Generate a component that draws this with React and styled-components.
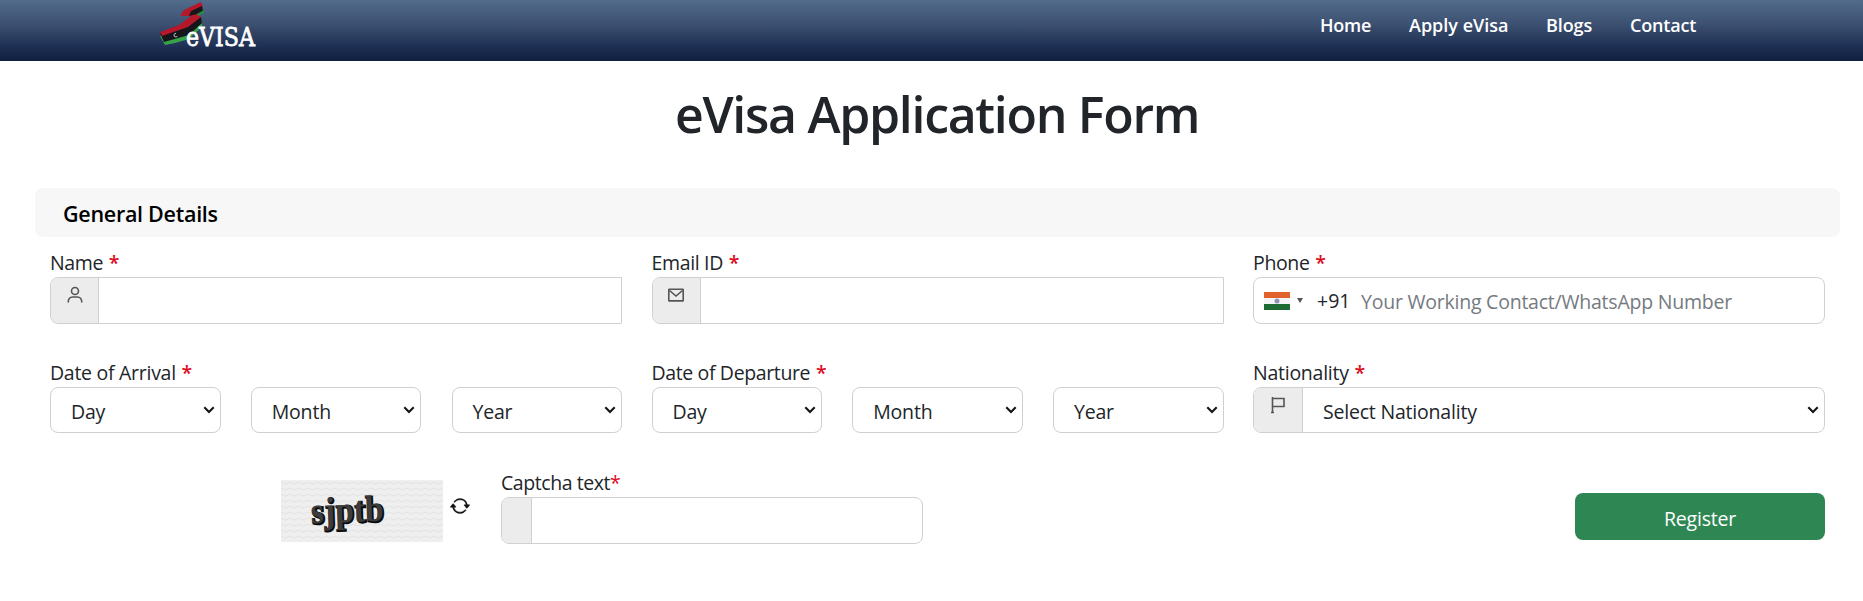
import styled, { createGlobalStyle } from "styled-components";
import { BsArrowRepeat } from "react-icons/bs";

const GlobalStyle = createGlobalStyle`
  * {
    box-sizing: border-box;
  }
  body {
    margin: 0;
    background: #fff;
    color: #212529;
    font-family: "Open Sans", "Noto Sans", sans-serif;
    font-size: 19.5px;
    line-height: 30px;
    overflow: hidden;
  }
`;

const Header = styled.header`
  display: flex;
  justify-content: space-between;
  height: 61px;
  padding: 0 167px 0 155px;
  background: linear-gradient(#526c8b 0%, #3c5071 40%, #1b2c50 80%, #10203f 100%);
`;

const LogoSvg = styled.svg`
  display: block;
  width: 140px;
  height: 60px;
`;

const Nav = styled.nav`
  display: flex;
  gap: 38px;
  padding-top: 10px;
`;

const NavLink = styled.a`
  width: ${({ $width }) => $width}px;
  color: #fff;
  font-size: 18px;
  font-weight: 600;
  letter-spacing: ${({ $spacing }) => $spacing}px;
  white-space: nowrap;
`;

const Title = styled.h1`
  margin: 0;
  padding: 19px 0 0 675px;
  height: 127px;
  font-size: 50px;
  font-weight: 600;
  line-height: 68px;
  letter-spacing: -1.3px;
  white-space: nowrap;
`;

const SectionBar = styled.h2`
  margin: 0 23px 0 35px;
  height: 49px;
  padding: 1px 0 0 28px;
  border-radius: 8px;
  background: #f7f7f7;
  color: #000;
  font-size: 21.5px;
  font-weight: 600;
  line-height: 50px;
  letter-spacing: -0.28px;
`;

const Form = styled.form`
  display: grid;
  grid-template-columns: repeat(3, 572px);
  column-gap: 29.5px;
  row-gap: 33px;
  padding: 10px 0 0 50px;
`;

const Label = styled.label`
  display: block;
  height: 30px;
  padding-top: 1px;
  letter-spacing: ${({ $spacing = -0.35 }) => $spacing}px;
  white-space: nowrap;
`;

const Required = styled.span`
  margin-left: ${({ $bold }) => ($bold ? 1 : 0)}px;
  color: #dc0c1c;
  font-weight: ${({ $bold }) => ($bold ? 600 : 400)};
`;

const Group = styled.div`
  display: flex;
  width: ${({ $width }) => ($width ? `${$width}px` : "100%")};
  height: ${({ $height = 47 }) => $height}px;
  border: 1px solid #ced0d3;
  border-radius: ${({ $radius = "8px" }) => $radius};
  background: #fff;
  overflow: hidden;
`;

const Addon = styled.span`
  display: flex;
  justify-content: center;
  flex: none;
  width: ${({ $width = 48 }) => $width}px;
  padding-top: 8px;
  border-right: 1px solid #ced0d3;
  background: #ececec;
`;

const AddonSvg = styled.svg`
  width: 18px;
  height: 18px;
  fill: none;
  stroke: #555;
  stroke-width: 1.6;
`;

const Input = styled.input`
  flex: 1;
  min-width: 0;
  padding: 2px 0 0;
  border: 0;
  outline: 0;
  background: transparent;
  color: inherit;
  font: inherit;
  letter-spacing: -0.23px;
  &::placeholder {
    color: #757a80;
    opacity: 1;
  }
`;

const DialCode = styled.div`
  display: flex;
  align-items: center;
  flex: none;
  width: 107px;
  padding-left: 10px;
`;

const Flag = styled.svg`
  width: 26px;
  height: 18px;
`;

const Caret = styled.span`
  margin: 0 14px 0 7px;
  border: 3px solid transparent;
  border-top: 5px solid #555;
  border-bottom: 0;
`;

const DateRow = styled.div`
  display: grid;
  grid-template-columns: repeat(3, 170.5px);
  justify-content: space-between;
`;

const Choice = styled.div`
  display: flex;
  align-items: center;
  justify-content: space-between;
  flex: 1;
  padding: 4px 5px 0 20px;
  letter-spacing: -0.2px;
`;

const ChevronSvg = styled.svg`
  width: 12px;
  height: 8px;
  margin-top: -4px;
`;

const BottomRow = styled.div`
  display: flex;
  align-items: flex-start;
  padding: 34px 0 0 281px;
`;

const CaptchaSvg = styled.svg`
  width: 162px;
  height: 62px;
  margin: 13px 7px 0 0;
`;

const Refresh = styled.button`
  display: flex;
  width: 20px;
  margin: 29px 31px 0 0;
  padding: 0;
  border: 0;
  background: none;
  color: #111;
  font-size: 20px;
  & svg {
    stroke: #111;
    stroke-width: 0.4;
  }
`;

const Register = styled.button`
  width: 250px;
  height: 47px;
  margin: 26px 0 0 652px;
  padding: 4px 0 0;
  border: 0;
  border-radius: 8px;
  background: #2e8653;
  color: #fff;
  font: inherit;
  letter-spacing: -0.2px;
`;

const links = [
  { text: "Home", width: 51, spacing: -0.2 },
  { text: "Apply eVisa", width: 99, spacing: 0 },
  { text: "Blogs", width: 46, spacing: -0.1 },
  { text: "Contact", width: 66, spacing: -0.2 },
];

function Logo() {
  return (
    <LogoSvg viewBox="0 0 140 60" aria-label="eVISA">
      {/* ribbon, lowest band first */}
      <path d="M5 36 L10 45 L20 43 L34 39 L47 27 L47 20 L33 33Z" fill="#36a34a" />
      <path d="M5 33 L25 28 L46 17 L47 23 L34 35 L9 42Z" fill="#15151b" />
      <path d="M5 32 L24 25 L36 16 L25 16 L29 10 L46 2 L48 7 L41 12 L46 17 L33 27 L7 36Z" fill="#b5182b" />
      <path d="M36 11 L47 6 L48 11 L42 14 L34 16Z" fill="#18151b" />
      <path d="M42 14 L49 10 L49 13 L43 16Z" fill="#278c3c" />
      <path d="M21 33.4 a1.8 1.8 0 1 0 1.4 2.6" fill="none" stroke="#ddd" strokeWidth=".9" />
      <text
        x="31"
        y="46"
        fill="#fff"
        stroke="#fff"
        strokeWidth=".8"
        fontFamily="DejaVu Serif"
        fontSize="26"
        textLength="69"
        lengthAdjust="spacingAndGlyphs"
      >
        eVISA
      </text>
    </LogoSvg>
  );
}

function UserIcon() {
  return (
    <AddonSvg viewBox="0 0 18 18">
      <circle cx="9" cy="5" r="3.5" />
      <path d="M2.3 16.5 V15.5 A4.5 4.5 0 0 1 6.5 11 H11.5 A4.5 4.5 0 0 1 15.7 15.5 V16.5" />
    </AddonSvg>
  );
}

function MailIcon() {
  return (
    <AddonSvg viewBox="0 0 18 18">
      <rect x="1.8" y="3.3" width="14.4" height="11.6" rx=".5" />
      <path d="M2.5 4.5 L9 10 L15.5 4.5" />
    </AddonSvg>
  );
}

function FlagIcon() {
  return (
    <AddonSvg viewBox="0 0 18 18">
      <path d="M3.5 1 V17 M2 16.5 H5 M3.5 2.5 H15 V10.5 H3.5" />
    </AddonSvg>
  );
}

function Chevron() {
  return (
    <ChevronSvg viewBox="0 0 12 8">
      <path d="M1.3 1.3 L6 6 L10.7 1.3" fill="none" stroke="#151515" strokeWidth="2.1" />
    </ChevronSvg>
  );
}

function Select({ children, icon }) {
  return (
    <Group $height={46}>
      {icon && <Addon $width={49}>{icon}</Addon>}
      <Choice role="combobox">
        {children}
        <Chevron />
      </Choice>
    </Group>
  );
}

function Field({ label, spacing, children }) {
  return (
    <div>
      <Label $spacing={spacing}>
        {label} <Required $bold>*</Required>
      </Label>
      {children}
    </div>
  );
}

function DateSelects() {
  return (
    <DateRow>
      <Select>Day</Select>
      <Select>Month</Select>
      <Select>Year</Select>
    </DateRow>
  );
}

function Captcha() {
  return (
    <CaptchaSvg viewBox="0 0 162 62">
      <defs>
        <pattern id="waves" width="9" height="6" patternUnits="userSpaceOnUse">
          <path d="M0 2 L4.5 4 L9 2" fill="none" stroke="#e5e5e5" strokeWidth="1.3" />
        </pattern>
      </defs>
      <rect width="162" height="62" fill="#efefef" />
      <rect width="162" height="62" fill="url(#waves)" />
      <g fontFamily="Liberation Serif" fontWeight="700" fontSize="37" transform="rotate(-2 66 40)">
        <text x="31" y="43" fill="#0c0c0c" stroke="#0c0c0c" strokeWidth="1.8" textLength="73" lengthAdjust="spacingAndGlyphs">
          sjptb
        </text>
        <text x="30" y="42" fill="#3c3c3c" textLength="73" lengthAdjust="spacingAndGlyphs" aria-hidden="true">
          sjptb
        </text>
      </g>
    </CaptchaSvg>
  );
}

export default function App() {
  return (
    <>
      <GlobalStyle />
      <Header>
        <Logo />
        <Nav>
          {links.map((link) => (
            <NavLink key={link.text} $width={link.width} $spacing={link.spacing}>
              {link.text}
            </NavLink>
          ))}
        </Nav>
      </Header>
      <Title>eVisa Application Form</Title>
      <SectionBar>General Details</SectionBar>
      <Form>
        <Field label="Name">
          <Group $radius="8px 0 0 8px">
            <Addon><UserIcon /></Addon>
            <Input />
          </Group>
        </Field>
        <Field label="Email ID">
          <Group $radius="8px 0 0 8px">
            <Addon><MailIcon /></Addon>
            <Input />
          </Group>
        </Field>
        <Field label="Phone">
          <Group>
            <DialCode>
              <Flag viewBox="0 0 26 18">
                <rect width="26" height="18" fill="#f4f4f6" />
                <rect width="26" height="6" fill="#e2622d" />
                <rect y="12" width="26" height="6" fill="#1f6b34" />
                <circle cx="13" cy="9" r="2.5" fill="#8f93b8" />
              </Flag>
              <Caret />
              +91
            </DialCode>
            <Input placeholder="Your Working Contact/WhatsApp Number" />
          </Group>
        </Field>
        <Field label="Date of Arrival" spacing={-0.28}>
          <DateSelects />
        </Field>
        <Field label="Date of Departure" spacing={-0.37}>
          <DateSelects />
        </Field>
        <Field label="Nationality" spacing={-0.25}>
          <Select icon={<FlagIcon />}>Select Nationality</Select>
        </Field>
      </Form>
      <BottomRow>
        <Captcha />
        <Refresh type="button" aria-label="Refresh">
          <BsArrowRepeat />
        </Refresh>
        <div>
          <Label $spacing={-0.43}>
            Captcha text<Required>*</Required>
          </Label>
          <Group $width={422}>
            <Addon $width={30} />
            <Input />
          </Group>
        </div>
        <Register type="button">Register</Register>
      </BottomRow>
    </>
  );
}
